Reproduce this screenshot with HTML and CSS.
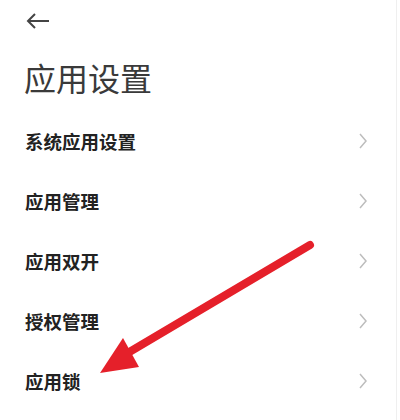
FILE: index.html
```html
<!DOCTYPE html>
<html lang="zh">
<head>
<meta charset="utf-8">
<link rel="stylesheet" href="styles.css">
</head>
<body>
<div class="page">
  <div class="header">
    <svg class="back" width="24" height="16" viewBox="0 0 24 16">
      <path d="M23 8H2M9 1L2 8l7 7" fill="none" stroke="#444" stroke-width="2"/>
    </svg>
  </div>
  <h1 class="title">应用设置</h1>
  <ul class="list">
    <li class="row"><span class="label">系统应用设置</span><svg class="chev" width="8" height="16" viewBox="0 0 8 16"><polyline points="1,1 7,8 1,15" fill="none" stroke="#bdbdbd" stroke-width="1.5"/></svg></li>
    <li class="row"><span class="label">应用管理</span><svg class="chev" width="8" height="16" viewBox="0 0 8 16"><polyline points="1,1 7,8 1,15" fill="none" stroke="#bdbdbd" stroke-width="1.5"/></svg></li>
    <li class="row"><span class="label">应用双开</span><svg class="chev" width="8" height="16" viewBox="0 0 8 16"><polyline points="1,1 7,8 1,15" fill="none" stroke="#bdbdbd" stroke-width="1.5"/></svg></li>
    <li class="row"><span class="label">授权管理</span><svg class="chev" width="8" height="16" viewBox="0 0 8 16"><polyline points="1,1 7,8 1,15" fill="none" stroke="#bdbdbd" stroke-width="1.5"/></svg></li>
    <li class="row"><span class="label">应用锁</span><svg class="chev" width="8" height="16" viewBox="0 0 8 16"><polyline points="1,1 7,8 1,15" fill="none" stroke="#bdbdbd" stroke-width="1.5"/></svg></li>
  </ul>
  <svg class="pointer" width="400" height="420" viewBox="0 0 400 420">
    <line x1="126" y1="354" x2="310" y2="245" stroke="#e5202a" stroke-width="8" stroke-linecap="round"/>
    <polygon points="100,373 123,338 139,367" fill="#e5202a"/>
  </svg>
</div>
</body>
</html>
```
FILE: styles.css
```css
html, body {
  margin: 0;
  padding: 0;
  background: #fff;
}
.page {
  position: relative;
  width: 396px;
  height: 420px;
  border-right: 1px solid #efefef;
  font-family: "Noto Sans CJK SC", "Noto Sans", sans-serif;
  overflow: hidden;
}
.header {
  height: 42px;
  display: flex;
  align-items: center;
  padding-left: 26px;
}
.back {
  display: block;
}
.title {
  margin: 0;
  padding: 2px 0 0 24px;
  height: 67px;
  line-height: 67px;
  font-size: 32px;
  font-weight: 400;
  color: #3a3a3a;
}
.list {
  list-style: none;
  margin: 0;
  padding: 0;
}
.row {
  height: 60px;
  display: flex;
  align-items: center;
  justify-content: space-between;
  padding: 0 29px 0 25px;
}
.label {
  font-size: 18.5px;
  font-weight: 700;
  color: #222;
}
.chev {
  display: block;
}
.pointer {
  position: absolute;
  left: 0;
  top: 0;
}
```
